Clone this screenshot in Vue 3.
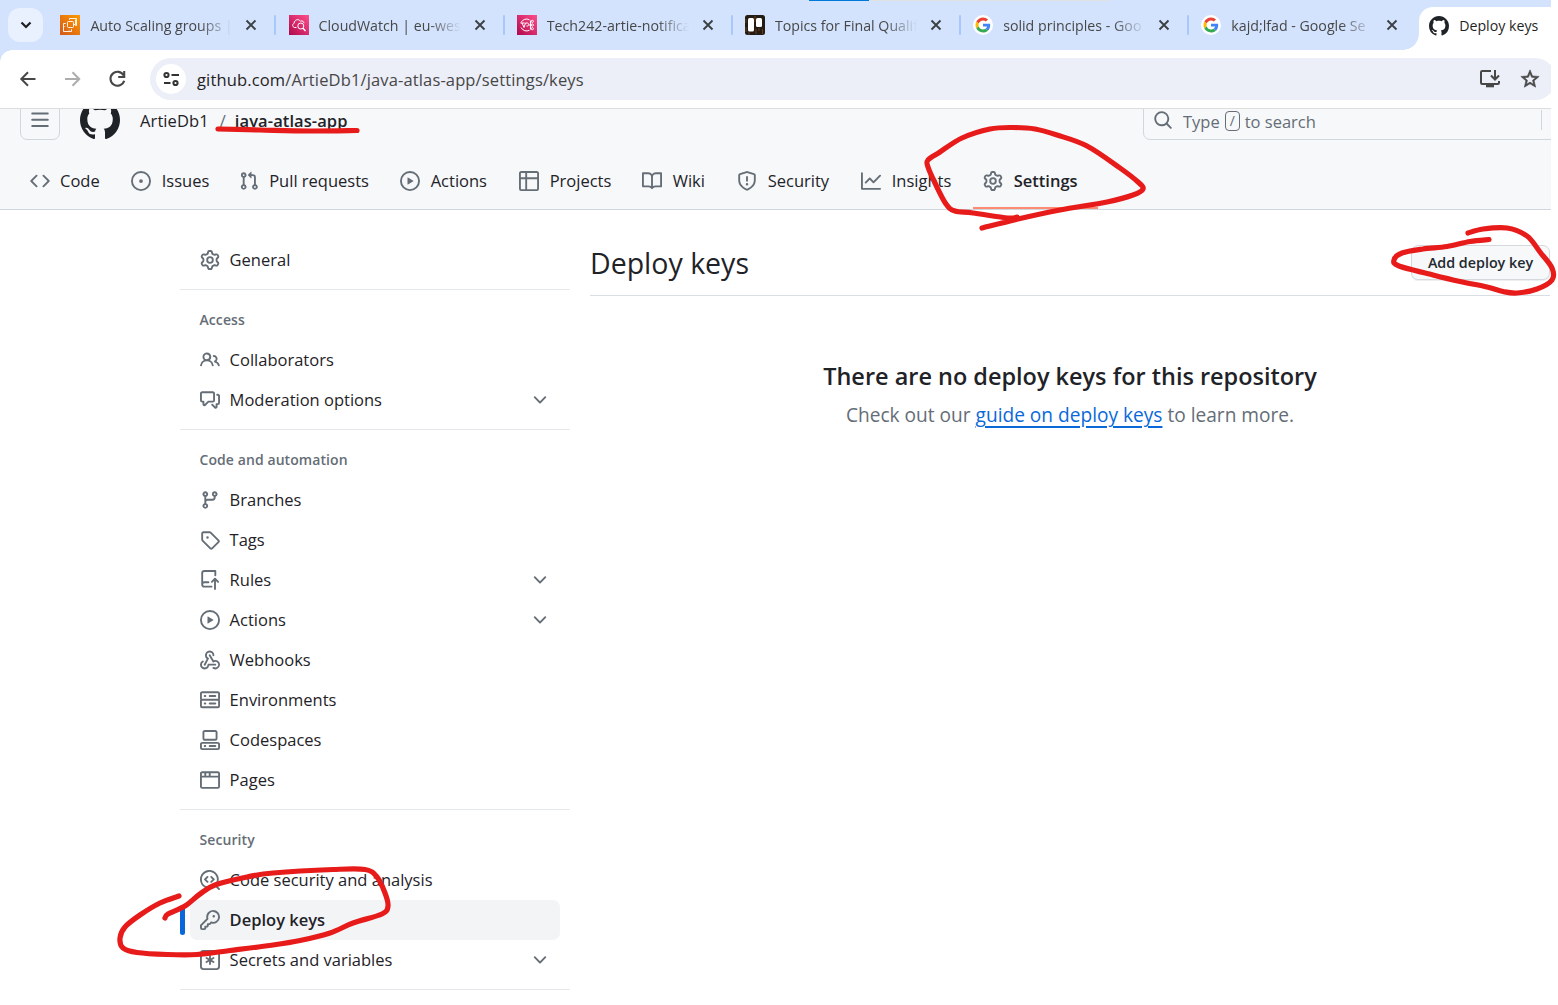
<script setup>
const icons = {
  bars: 'M1 2.75A.75.75 0 0 1 1.75 2h12.5a.75.75 0 0 1 0 1.5H1.75A.75.75 0 0 1 1 2.75Zm0 5A.75.75 0 0 1 1.75 7h12.5a.75.75 0 0 1 0 1.5H1.75A.75.75 0 0 1 1 7.75ZM1.75 12h12.5a.75.75 0 0 1 0 1.5H1.75a.75.75 0 0 1 0-1.5Z',
  github: 'M8 0c4.42 0 8 3.58 8 8a8.013 8.013 0 0 1-5.45 7.59c-.4.08-.55-.17-.55-.38 0-.27.01-1.13.01-2.2 0-.75-.25-1.23-.54-1.48 1.78-.2 3.65-.88 3.65-3.95 0-.88-.31-1.59-.82-2.15.08-.2.36-1.02-.08-2.12 0 0-.67-.22-2.2.82-.64-.18-1.32-.27-2-.27-.68 0-1.36.09-2 .27-1.53-1.03-2.2-.82-2.2-.82-.44 1.1-.16 1.92-.08 2.12-.51.56-.82 1.28-.82 2.15 0 3.06 1.86 3.75 3.64 3.95-.23.2-.44.55-.51 1.07-.46.21-1.61.55-2.33-.66-.15-.24-.6-.83-1.23-.82-.67.01-.27.38.01.53.34.19.73.9.82 1.13.16.45.68 1.31 2.69.94 0 .67.01 1.3.01 1.49 0 .21-.15.45-.55.38A7.995 7.995 0 0 1 0 8c0-4.42 3.58-8 8-8Z',
  search: 'M10.68 11.74a6 6 0 0 1-7.922-8.982 6 6 0 0 1 8.982 7.922l3.04 3.04a.749.749 0 0 1-.326 1.275.749.749 0 0 1-.734-.215ZM11.5 7a4.499 4.499 0 1 0-8.997 0A4.499 4.499 0 0 0 11.5 7Z',
  code: 'm11.28 3.22 4.25 4.25a.75.75 0 0 1 0 1.06l-4.25 4.25a.749.749 0 0 1-1.275-.326.749.749 0 0 1 .215-.734L13.94 8l-3.72-3.72a.749.749 0 0 1 .326-1.275.749.749 0 0 1 .734.215Zm-6.56 0a.751.751 0 0 1 1.042.018.751.751 0 0 1 .018 1.042L2.06 8l3.72 3.72a.749.749 0 0 1-.326 1.275.749.749 0 0 1-.734-.215L.47 8.53a.75.75 0 0 1 0-1.06Z',
  issue: 'M8 9.5a1.5 1.5 0 1 0 0-3 1.5 1.5 0 0 0 0 3ZM8 0a8 8 0 1 1 0 16A8 8 0 0 1 8 0ZM1.5 8a6.5 6.5 0 1 0 13 0 6.5 6.5 0 0 0-13 0Z',
  pull: 'M1.5 3.25a2.25 2.25 0 1 1 3 2.122v5.256a2.251 2.251 0 1 1-1.5 0V5.372A2.25 2.25 0 0 1 1.5 3.25Zm5.677-.177L9.573.677A.25.25 0 0 1 10 .854V2.5h1A2.5 2.5 0 0 1 13.5 5v5.628a2.251 2.251 0 1 1-1.5 0V5a1 1 0 0 0-1-1h-1v1.646a.25.25 0 0 1-.427.177L7.177 3.427a.25.25 0 0 1 0-.354ZM3.75 2.5a.75.75 0 1 0 0 1.5.75.75 0 0 0 0-1.5Zm0 9.5a.75.75 0 1 0 0 1.5.75.75 0 0 0 0-1.5Zm8.25.75a.75.75 0 1 0 1.5 0 .75.75 0 0 0-1.5 0Z',
  play: 'M8 0a8 8 0 1 1 0 16A8 8 0 0 1 8 0ZM1.5 8a6.5 6.5 0 1 0 13 0 6.5 6.5 0 0 0-13 0Zm4.879-2.773 4.264 2.559a.25.25 0 0 1 0 .428l-4.264 2.559A.25.25 0 0 1 6 10.559V5.442a.25.25 0 0 1 .379-.215Z',
  table: 'M0 1.75C0 .784.784 0 1.75 0h12.5C15.216 0 16 .784 16 1.75v12.5A1.75 1.75 0 0 1 14.25 16H1.75A1.75 1.75 0 0 1 0 14.25ZM6.5 6.5v8h7.75a.25.25 0 0 0 .25-.25V6.5Zm8-1.5V1.75a.25.25 0 0 0-.25-.25H6.5V5Zm-13 1.5v7.75c0 .138.112.25.25.25H5v-8ZM5 5V1.5H1.75a.25.25 0 0 0-.25.25V5Z',
  book: 'M0 1.75A.75.75 0 0 1 .75 1h4.253c1.227 0 2.317.59 3 1.501A3.743 3.743 0 0 1 11.006 1h4.245a.75.75 0 0 1 .75.75v10.5a.75.75 0 0 1-.75.75h-4.507a2.25 2.25 0 0 0-1.591.659l-.622.621a.75.75 0 0 1-1.06 0l-.622-.621A2.25 2.25 0 0 0 5.258 13H.75a.75.75 0 0 1-.75-.75Zm7.251 10.324.004-5.073-.002-2.253A2.25 2.25 0 0 0 5.003 2.5H1.5v9h3.757a3.75 3.75 0 0 1 1.994.574ZM8.755 4.75l-.004 7.322a3.752 3.752 0 0 1 1.992-.572H14.5v-9h-3.495a2.25 2.25 0 0 0-2.25 2.25Z',
  shield: 'M7.467.133a1.748 1.748 0 0 1 1.066 0l5.25 1.68A1.75 1.75 0 0 1 15 3.48V7c0 1.566-.32 3.182-1.303 4.682-.983 1.498-2.585 2.813-5.032 3.855a1.697 1.697 0 0 1-1.33 0c-2.447-1.042-4.049-2.357-5.032-3.855C1.32 10.182 1 8.566 1 7V3.48a1.75 1.75 0 0 1 1.217-1.667Zm.61 1.429a.25.25 0 0 0-.153 0l-5.25 1.68a.25.25 0 0 0-.174.238V7c0 1.358.275 2.666 1.057 3.86.784 1.194 2.121 2.34 4.366 3.297a.196.196 0 0 0 .154 0c2.245-.956 3.582-2.104 4.366-3.298C13.225 9.666 13.5 8.36 13.5 7V3.48a.251.251 0 0 0-.174-.237l-5.25-1.68ZM8.75 4.75v3a.75.75 0 0 1-1.5 0v-3a.75.75 0 0 1 1.5 0ZM9 10.5a1 1 0 1 1-2 0 1 1 0 0 1 2 0Z',
  graph: 'M1.5 1.75V13.5h13.75a.75.75 0 0 1 0 1.5H.75a.75.75 0 0 1-.75-.75V1.75a.75.75 0 0 1 1.5 0Zm14.28 2.53-5.25 5.25a.75.75 0 0 1-1.06 0L7 7.06 4.28 9.78a.751.751 0 0 1-1.042-.018.751.751 0 0 1-.018-1.042l3.25-3.25a.75.75 0 0 1 1.06 0L10 7.94l4.72-4.72a.751.751 0 0 1 1.042.018.751.751 0 0 1 .018 1.042Z',
  gear: 'M8 0a8.2 8.2 0 0 1 .701.031C9.444.095 9.99.645 10.16 1.29l.288 1.107c.018.066.079.158.212.224.231.114.454.243.668.386.123.082.233.09.299.071l1.103-.303c.644-.176 1.392.021 1.82.63.27.385.506.792.704 1.218.315.675.111 1.422-.364 1.891l-.814.806c-.049.048-.098.147-.088.294.016.257.016.515 0 .772-.01.147.038.246.088.294l.814.806c.475.469.679 1.216.364 1.891a7.977 7.977 0 0 1-.704 1.217c-.428.61-1.176.807-1.82.63l-1.102-.302c-.067-.019-.177-.011-.3.071a5.909 5.909 0 0 1-.668.386c-.133.066-.194.158-.211.224l-.29 1.106c-.168.646-.715 1.196-1.458 1.26a8.006 8.006 0 0 1-1.402 0c-.743-.064-1.289-.614-1.458-1.26l-.289-1.106c-.018-.066-.079-.158-.212-.224a5.738 5.738 0 0 1-.668-.386c-.123-.082-.233-.09-.299-.071l-1.103.303c-.644.176-1.392-.021-1.82-.63a8.12 8.12 0 0 1-.704-1.218c-.315-.675-.111-1.422.363-1.891l.815-.806c.05-.048.098-.147.088-.294a6.214 6.214 0 0 1 0-.772c.01-.147-.038-.246-.088-.294l-.815-.806C.635 6.045.431 5.298.746 4.623a7.92 7.92 0 0 1 .704-1.217c.428-.61 1.176-.807 1.82-.63l1.102.302c.067.019.177.011.3-.071.214-.143.437-.272.668-.386.133-.066.194-.158.211-.224l.29-1.106C6.009.645 6.556.095 7.299.03 7.53.01 7.764 0 8 0Zm-.571 1.525c-.036.003-.108.036-.137.146l-.289 1.105c-.147.561-.549.967-.998 1.189-.173.086-.34.183-.5.29-.417.278-.97.423-1.529.27l-1.103-.303c-.109-.03-.175.016-.195.045-.22.312-.412.644-.573.99-.014.031-.021.11.059.19l.815.806c.411.406.562.957.53 1.456a4.709 4.709 0 0 0 0 .582c.032.499-.119 1.05-.53 1.456l-.815.806c-.081.08-.073.159-.059.19.162.346.353.677.573.989.02.03.085.076.195.046l1.102-.303c.56-.153 1.113-.008 1.53.27.161.107.328.204.501.29.447.222.85.629.997 1.189l.289 1.105c.029.109.101.143.137.146a6.6 6.6 0 0 0 1.142 0c.036-.003.108-.036.137-.146l.289-1.105c.147-.561.549-.967.998-1.189.173-.086.34-.183.5-.29.417-.278.97-.423 1.529-.27l1.103.303c.109.029.175-.016.195-.045.22-.313.411-.644.573-.99.014-.031.021-.11-.059-.19l-.815-.806c-.411-.406-.562-.957-.53-1.456a4.709 4.709 0 0 0 0-.582c-.032-.499.119-1.05.53-1.456l.815-.806c.081-.08.073-.159.059-.19a6.464 6.464 0 0 0-.573-.989c-.02-.03-.085-.076-.195-.046l-1.102.303c-.56.153-1.113.008-1.53-.27a4.44 4.44 0 0 0-.501-.29c-.447-.222-.85-.629-.997-1.189l-.289-1.105c-.029-.11-.101-.143-.137-.146a6.6 6.6 0 0 0-1.142 0ZM11 8a3 3 0 1 1-6 0 3 3 0 0 1 6 0ZM9.5 8a1.5 1.5 0 1 0-3.001.001A1.5 1.5 0 0 0 9.5 8Z',
  people: 'M2 5.5a3.5 3.5 0 1 1 5.898 2.549 5.508 5.508 0 0 1 3.034 4.084.75.75 0 1 1-1.482.235 4 4 0 0 0-7.9 0 .75.75 0 0 1-1.482-.236A5.507 5.507 0 0 1 3.102 8.05 3.493 3.493 0 0 1 2 5.5ZM11 4a3.001 3.001 0 0 1 2.22 5.018 5.01 5.01 0 0 1 2.56 3.012.749.749 0 0 1-.885.954.752.752 0 0 1-.549-.514 3.507 3.507 0 0 0-2.522-2.372.75.75 0 0 1-.574-.73v-.352a.75.75 0 0 1 .416-.672A1.5 1.5 0 0 0 11 5.5.75.75 0 0 1 11 4Zm-5.5-.5a2 2 0 1 0-.001 3.999A2 2 0 0 0 5.5 3.5Z',
  comments: 'M1.75 1h8.5c.966 0 1.75.784 1.75 1.75v5.5A1.75 1.75 0 0 1 10.25 10H7.061l-2.574 2.573A1.458 1.458 0 0 1 2 11.543V10h-.25A1.75 1.75 0 0 1 0 8.25v-5.5C0 1.784.784 1 1.75 1ZM1.5 2.75v5.5c0 .138.112.25.25.25h1a.75.75 0 0 1 .75.75v2.19l2.72-2.72a.749.749 0 0 1 .53-.22h3.5a.25.25 0 0 0 .25-.25v-5.5a.25.25 0 0 0-.25-.25h-8.5a.25.25 0 0 0-.25.25Zm13 2a.25.25 0 0 0-.25-.25h-.5a.75.75 0 0 1 0-1.5h.5c.966 0 1.75.784 1.75 1.75v5.5A1.75 1.75 0 0 1 14.25 12H14v1.543a1.458 1.458 0 0 1-2.487 1.03L9.22 12.28a.749.749 0 0 1 .326-1.275.749.749 0 0 1 .734.215l2.22 2.22v-2.19a.75.75 0 0 1 .75-.75h1a.25.25 0 0 0 .25-.25Z',
  chevron: 'M12.78 5.22a.749.749 0 0 1 0 1.06l-4.25 4.25a.749.749 0 0 1-1.06 0L3.22 6.28a.749.749 0 1 1 1.06-1.06L8 8.939l3.72-3.719a.749.749 0 0 1 1.06 0Z',
  branch: 'M9.5 3.25a2.25 2.25 0 1 1 3 2.122V6A2.5 2.5 0 0 1 10 8.5H6a1 1 0 0 0-1 1v1.128a2.251 2.251 0 1 1-1.5 0V5.372a2.25 2.25 0 1 1 1.5 0v1.836A2.493 2.493 0 0 1 6 7h4a1 1 0 0 0 1-1v-.628A2.25 2.25 0 0 1 9.5 3.25Zm-6 0a.75.75 0 1 0 1.5 0 .75.75 0 0 0-1.5 0Zm8.25-.75a.75.75 0 1 0 0 1.5.75.75 0 0 0 0-1.5ZM4.25 12a.75.75 0 1 0 0 1.5.75.75 0 0 0 0-1.5Z',
  tag: 'M1 7.775V2.75C1 1.784 1.784 1 2.75 1h5.025c.464 0 .91.184 1.238.513l6.25 6.25a1.75 1.75 0 0 1 0 2.474l-5.026 5.026a1.75 1.75 0 0 1-2.474 0l-6.25-6.25A1.752 1.752 0 0 1 1 7.775Zm1.5 0c0 .066.026.13.073.177l6.25 6.25a.25.25 0 0 0 .354 0l5.025-5.025a.25.25 0 0 0 0-.354l-6.25-6.25a.25.25 0 0 0-.177-.073H2.75a.25.25 0 0 0-.25.25ZM6 5a1 1 0 1 1 0 2 1 1 0 0 1 0-2Z',
  push: 'M1 2.5A2.5 2.5 0 0 1 3.5 0h8.75a.75.75 0 0 1 .75.75v3.5a.75.75 0 0 1-1.5 0V1.5h-8a1 1 0 0 0-1 1v6.708A2.493 2.493 0 0 1 3.5 9h3.25a.75.75 0 0 1 0 1.5H3.5a1 1 0 0 0 0 2h5.75a.75.75 0 0 1 0 1.5H3.5A2.5 2.5 0 0 1 1 11.5ZM12.75 8.81v6.44a.75.75 0 0 1-1.5 0V8.81l-1.22 1.22a.75.75 0 0 1-1.06-1.06l2.5-2.5a.75.75 0 0 1 1.06 0l2.5 2.5a.75.75 0 0 1-1.06 1.06Z',
  webhook: 'M5.5 4.25a2.25 2.25 0 0 1 4.5 0 .75.75 0 0 0 1.5 0 3.75 3.75 0 1 0-6.14 2.889l-2.272 4.258a.75.75 0 0 0 1.324.706L7 7.25a.75.75 0 0 0-.309-1.015A2.25 2.25 0 0 1 5.5 4.25ZM7.364 3.607a.75.75 0 0 1 1.03.257l2.608 4.349a3.75 3.75 0 1 1-.628 6.785.75.75 0 0 1 .752-1.299 2.25 2.25 0 1 0-.033-3.88.75.75 0 0 1-1.03-.256L7.107 4.636a.75.75 0 0 1 .257-1.03ZM2.9 8.776A.75.75 0 0 1 2.625 9.8 2.25 2.25 0 1 0 6 11.75a.75.75 0 0 1 .75-.751h5.5a.75.75 0 0 1 0 1.5H7.425a3.751 3.751 0 1 1-5.55-3.998.75.75 0 0 1 1.024.274Z',
  server: 'M1.75 1h12.5c.966 0 1.75.784 1.75 1.75v4c0 .372-.116.717-.314 1 .198.283.314.628.314 1v4a1.75 1.75 0 0 1-1.75 1.75H1.75A1.75 1.75 0 0 1 0 12.75v-4c0-.358.109-.707.314-1a1.739 1.739 0 0 1-.314-1v-4C0 1.784.784 1 1.75 1ZM1.5 2.75v4c0 .138.112.25.25.25h12.5a.25.25 0 0 0 .25-.25v-4a.25.25 0 0 0-.25-.25H1.75a.25.25 0 0 0-.25.25Zm.25 5.75a.25.25 0 0 0-.25.25v4c0 .138.112.25.25.25h12.5a.25.25 0 0 0 .25-.25v-4a.25.25 0 0 0-.25-.25ZM7 4.75A.75.75 0 0 1 7.75 4h4.5a.75.75 0 0 1 0 1.5h-4.5A.75.75 0 0 1 7 4.75ZM7.75 10h4.5a.75.75 0 0 1 0 1.5h-4.5a.75.75 0 0 1 0-1.5ZM3 4.75A.75.75 0 0 1 3.75 4h.5a.75.75 0 0 1 0 1.5h-.5A.75.75 0 0 1 3 4.75ZM3.75 10h.5a.75.75 0 0 1 0 1.5h-.5a.75.75 0 0 1 0-1.5Z',
  codespaces: 'M0 11.25c0-.966.784-1.75 1.75-1.75h12.5c.966 0 1.75.784 1.75 1.75v3A1.75 1.75 0 0 1 14.25 16H1.75A1.75 1.75 0 0 1 0 14.25Zm2-9.5C2 .784 2.784 0 3.75 0h8.5C13.216 0 14 .784 14 1.75v5a1.75 1.75 0 0 1-1.75 1.75h-8.5A1.75 1.75 0 0 1 2 6.75Zm1.75-.25a.25.25 0 0 0-.25.25v5c0 .138.112.25.25.25h8.5a.25.25 0 0 0 .25-.25v-5a.25.25 0 0 0-.25-.25Zm-2 9.5a.25.25 0 0 0-.25.25v3c0 .138.112.25.25.25h12.5a.25.25 0 0 0 .25-.25v-3a.25.25 0 0 0-.25-.25ZM7 12.75a.75.75 0 0 1 .75-.75h4.5a.75.75 0 0 1 0 1.5h-4.5a.75.75 0 0 1-.75-.75Zm-4 0a.75.75 0 0 1 .75-.75h.5a.75.75 0 0 1 0 1.5h-.5a.75.75 0 0 1-.75-.75Z',
  browser: 'M0 2.75C0 1.784.784 1 1.75 1h12.5c.966 0 1.75.784 1.75 1.75v10.5A1.75 1.75 0 0 1 14.25 15H1.75A1.75 1.75 0 0 1 0 13.25ZM14.5 6h-13v7.25c0 .138.112.25.25.25h12.5a.25.25 0 0 0 .25-.25Zm-6-3.5v2h6V2.75a.25.25 0 0 0-.25-.25ZM5 2.5v2h2v-2Zm-3.25 0a.25.25 0 0 0-.25.25V4.5h2v-2Z',
  scan: 'M8.47 4.97a.75.75 0 0 1 1.06 0l2 2a.75.75 0 0 1 0 1.06l-2 2a.749.749 0 0 1-1.275-.326.749.749 0 0 1 .215-.734L9.94 7.5 8.47 6.03a.75.75 0 0 1 0-1.06ZM6.53 6.03 5.06 7.5l1.47 1.47a.749.749 0 0 1-.326 1.275.749.749 0 0 1-.734-.215l-2-2a.75.75 0 0 1 0-1.06l2-2a.751.751 0 0 1 1.042.018.751.751 0 0 1 .018 1.042ZM12.246 13.307a7.501 7.501 0 1 1 1.06-1.06l2.474 2.473a.749.749 0 0 1-.326 1.275.749.749 0 0 1-.734-.215ZM1.5 7.5a6.002 6.002 0 0 0 3.608 5.504 6.002 6.002 0 0 0 6.486-1.117.748.748 0 0 1 .292-.293A6 6 0 1 0 1.5 7.5Z',
  key: 'M10.5 0a5.499 5.499 0 1 1-1.288 10.848l-.932.932a.749.749 0 0 1-.53.22H7v.75a.749.749 0 0 1-.22.53l-.5.5a.749.749 0 0 1-.53.22H5v.75a.749.749 0 0 1-.22.53l-.5.5a.749.749 0 0 1-.53.22h-2A1.75 1.75 0 0 1 0 14.25v-2c0-.199.079-.389.22-.53l4.932-4.932A5.5 5.5 0 0 1 10.5 0Zm-4 5.5c-.001.431.069.86.205 1.269a.75.75 0 0 1-.181.768L1.5 12.56v1.69c0 .138.112.25.25.25h1.69l.06-.06v-1.19a.75.75 0 0 1 .75-.75h1.19l.06-.06v-1.19a.75.75 0 0 1 .75-.75h1.19l1.023-1.025a.75.75 0 0 1 .768-.18A4 4 0 1 0 6.5 5.5ZM11 6a1 1 0 1 1 0-2 1 1 0 0 1 0 2Z',
  asterisk: 'M0 2.75A2.75 2.75 0 0 1 2.75 0h10.5A2.75 2.75 0 0 1 16 2.75v10.5A2.75 2.75 0 0 1 13.25 16H2.75A2.75 2.75 0 0 1 0 13.25ZM2.75 1.5c-.69 0-1.25.56-1.25 1.25v10.5c0 .69.56 1.25 1.25 1.25h10.5c.69 0 1.25-.56 1.25-1.25V2.75c0-.69-.56-1.25-1.25-1.25ZM8 4a.75.75 0 0 1 .75.75V6.7l1.69-.975a.75.75 0 0 1 .75 1.3L9.5 8l1.69.976a.75.75 0 0 1-.75 1.298L8.75 9.3v1.951a.75.75 0 0 1-1.5 0V9.299l-1.69.976a.75.75 0 0 1-.75-1.3L6.5 8l-1.69-.975a.75.75 0 0 1 .75-1.3l1.69.976V4.75A.75.75 0 0 1 8 4Z'
}

const browserTabs = [
  { fav: 'ec2', title: 'Auto Scaling groups |' },
  { fav: 'cloudwatch', title: 'CloudWatch | eu-wes' },
  { fav: 'sns', title: 'Tech242-artie-notifica' },
  { fav: 'trello', title: 'Topics for Final Qualif' },
  { fav: 'google', title: 'solid principles - Goo' },
  { fav: 'google', title: 'kajd;lfad - Google Se' }
]

const repoNav = [
  { icon: 'code', label: 'Code' },
  { icon: 'issue', label: 'Issues' },
  { icon: 'pull', label: 'Pull requests' },
  { icon: 'play', label: 'Actions' },
  { icon: 'table', label: 'Projects' },
  { icon: 'book', label: 'Wiki' },
  { icon: 'shield', label: 'Security' },
  { icon: 'graph', label: 'Insights' },
  { icon: 'gear', label: 'Settings', active: true }
]

const groups = [
  { items: [{ icon: 'gear', label: 'General' }] },
  {
    heading: 'Access',
    items: [
      { icon: 'people', label: 'Collaborators' },
      { icon: 'comments', label: 'Moderation options', more: true }
    ]
  },
  {
    heading: 'Code and automation',
    items: [
      { icon: 'branch', label: 'Branches' },
      { icon: 'tag', label: 'Tags' },
      { icon: 'push', label: 'Rules', more: true },
      { icon: 'play', label: 'Actions', more: true },
      { icon: 'webhook', label: 'Webhooks' },
      { icon: 'server', label: 'Environments' },
      { icon: 'codespaces', label: 'Codespaces' },
      { icon: 'browser', label: 'Pages' }
    ]
  },
  {
    heading: 'Security',
    items: [
      { icon: 'scan', label: 'Code security and analysis' },
      { icon: 'key', label: 'Deploy keys', active: true },
      { icon: 'asterisk', label: 'Secrets and variables', more: true }
    ]
  }
]

// Freehand pen strokes, as the points the pen passed through.
const strokes = [
  [[218, 129], [260, 130], [310, 131], [357, 130.5]],
  [[982, 228], [1018, 219], [1060, 210], [1107, 202], [1133, 195], [1143, 189], [1138, 182], [1120, 168], [1087, 146], [1057, 135], [1035, 129], [1013, 127.5], [990, 129], [962, 138], [940, 152], [928, 160], [928, 167], [935, 183], [946, 204], [955, 211], [973, 213], [1008, 218], [1017, 217]],
  [[1468, 233], [1483, 229], [1507, 228], [1527, 236], [1540, 252], [1552, 268], [1552, 280], [1537, 289], [1517, 293], [1503, 291.5], [1487, 287], [1460, 281.5], [1433, 275], [1399, 266], [1394, 260], [1402, 253], [1423, 249], [1447, 246.5], [1470, 241.5], [1489, 239.5]],
  [[179, 896], [160, 903], [140, 915], [125, 927], [120, 938], [123, 948], [137, 952.5], [167, 954.5], [197, 954.5], [230, 950.5], [273, 945], [300, 940.5], [330, 933], [353, 923], [382, 914], [388, 906], [385, 893], [377, 877], [365, 869.5], [333, 869.5], [273, 873], [247, 877], [215, 885], [200, 894], [185, 906], [168, 914], [165, 918]]
]

function smooth(p) {
  let d = `M${p[0][0]} ${p[0][1]}`
  for (let i = 0; i < p.length - 1; i++) {
    const a = p[i - 1] || p[i]
    const b = p[i]
    const c = p[i + 1]
    const e = p[i + 2] || c
    d += `C${b[0] + (c[0] - a[0]) / 6} ${b[1] + (c[1] - a[1]) / 6} ${c[0] - (e[0] - b[0]) / 6} ${c[1] - (e[1] - b[1]) / 6} ${c[0]} ${c[1]}`
  }
  return d
}
</script>

<template>
  <div class="screen">
    <div class="window">
      <div class="tabstrip">
        <span class="loadbar"><i></i></span>
        <button class="tab-search">
          <svg width="12" height="8" viewBox="0 0 12 8"><path d="M1.5 1.5 6 6l4.5-4.5" fill="none" stroke="#1f1f1f" stroke-width="2.2" /></svg>
        </button>
        <div v-for="tab in browserTabs" :key="tab.title" class="tab">
          <svg v-if="tab.fav === 'ec2'" class="fav" viewBox="0 0 20 20">
            <defs><linearGradient id="orange" x1="0" y1="1" x2="1" y2="0"><stop stop-color="#d3591a" /><stop offset="1" stop-color="#f90" /></linearGradient></defs>
            <path fill="url(#orange)" d="M0 0h20v20H0z" />
            <g fill="none" stroke="#fff" stroke-width=".9">
              <rect x="7.500" y="6.500" width="6" height="6" rx="1" />
              <path d="M9.500 4.800V3.500h7v7h-1.300M5.800 8.500H3.500v8h8v-2.300M13.500 9.500h2v-5" />
              <path d="M9 16.500v-2M5.500 11.500h-2" opacity=".500" />
            </g>
          </svg>
          <svg v-else-if="tab.fav === 'cloudwatch'" class="fav" viewBox="0 0 20 20">
            <defs><linearGradient id="pink" x1="0" y1="1" x2="1" y2="0"><stop stop-color="#b0084d" /><stop offset="1" stop-color="#ff4f8b" /></linearGradient></defs>
            <path fill="url(#pink)" d="M0 0h20v20H0z" />
            <path d="M7.500 12.500H5.500C3.300 12 3 9 5.200 8.200 5.200 4.800 9.500 3.300 11.500 6.200c2-.900 3.300.300 3.500 2" fill="none" stroke="#fff" stroke-width="1" />
            <circle cx="11.800" cy="11" r="3" fill="none" stroke="#fff" stroke-width="1" />
            <path d="m14 13.200 2.500 2.800" stroke="#fff" stroke-width="1.400" />
          </svg>
          <svg v-else-if="tab.fav === 'sns'" class="fav" viewBox="0 0 20 20">
            <path fill="url(#pink)" d="M0 0h20v20H0z" />
            <path d="M12.500 4.800A6.200 6.200 0 0 0 4 7.500M4 12.500a6.200 6.200 0 0 0 8.500 2.700M3.500 8h4.200M5 8l2 4.500L8.500 8h2c1.500 0 1.500 3 0 3H9.500M12 10h1.500M13.500 5.500v9" fill="none" stroke="#fff" stroke-width="1" />
            <circle cx="15.300" cy="6.300" r="1.100" fill="none" stroke="#fff" /><circle cx="15.300" cy="10" r="1.100" fill="none" stroke="#fff" /><circle cx="15.300" cy="13.700" r="1.100" fill="none" stroke="#fff" />
          </svg>
          <svg v-else-if="tab.fav === 'trello'" class="fav" viewBox="0 0 20 20">
            <rect width="20" height="20" rx="2.500" fill="#231b14" />
            <path d="M1 12v5M4 17v3M11 14v5M14 13v3M17.500 14v5M1 4v4M10 1v6" stroke="#6b3d18" stroke-width="1" />
            <rect x="3" y="3" width="6" height="13.500" rx="1.500" fill="#fff" /><rect x="11" y="3" width="6" height="9" rx="1.500" fill="#fff" />
          </svg>
          <svg v-else class="fav" viewBox="0 0 20 20">
            <circle cx="10" cy="10" r="10" fill="#fff" />
            <g transform="translate(2.500 2.500) scale(.3125)">
              <path fill="#ea4335" d="M24 9.500c3.540 0 6.710 1.220 9.210 3.600l6.850-6.850C35.900 2.380 30.470 0 24 0 14.620 0 6.510 5.380 2.560 13.220l7.980 6.190C12.430 13.720 17.740 9.500 24 9.500z" />
              <path fill="#4285f4" d="M46.980 24.550c0-1.570-.150-3.090-.380-4.550H24v9.020h12.940c-.580 2.960-2.260 5.480-4.780 7.180l7.730 6c4.510-4.180 7.090-10.360 7.090-17.650z" />
              <path fill="#fbbc05" d="M10.530 28.590c-.480-1.450-.760-2.990-.760-4.590s.270-3.140.760-4.590l-7.980-6.190C.920 16.460 0 20.120 0 24c0 3.880.920 7.540 2.560 10.780l7.970-6.190z" />
              <path fill="#34a853" d="M24 48c6.480 0 11.930-2.130 15.890-5.810l-7.730-6c-2.150 1.450-4.920 2.300-8.160 2.300-6.260 0-11.570-4.220-13.470-9.910l-7.980 6.190C6.510 42.620 14.620 48 24 48z" />
            </g>
          </svg>
          <span class="tab-title">{{ tab.title }}</span>
          <svg class="close" viewBox="0 0 12 12"><path d="m1.500 1.500 9 9m0-9-9 9" stroke="#3c4043" stroke-width="1.900" /></svg>
          <i class="sep"></i>
        </div>
        <div class="tab-active">
          <svg class="fav" viewBox="0 0 16 16"><path fill="#1f2328" :d="icons.github" /></svg>
          <span>Deploy keys</span>
        </div>
      </div>

      <div class="toolbar">
        <svg class="nav-btn" viewBox="0 0 20 20"><path d="M17.500 10H4M10 3.300 3.300 10l6.700 6.700" fill="none" stroke="#474747" stroke-width="2" /></svg>
        <svg class="nav-btn" viewBox="0 0 20 20"><path d="M2 10H15.500M9.500 3.300l6.700 6.700-6.700 6.700" fill="none" stroke="#adadad" stroke-width="2" /></svg>
        <svg class="nav-btn" viewBox="0 0 20 20"><path d="M15.700 6.500A7 7 0 1 0 16.200 11.800" fill="none" stroke="#474747" stroke-width="2.100" /><path d="M16.200 2v6h-6" fill="none" stroke="#474747" stroke-width="2.100" /></svg>
        <div class="omnibox">
          <span class="site-info">
            <svg width="18" height="16" viewBox="0 0 18 16" fill="none" stroke="#333" stroke-width="2"><circle cx="4.500" cy="4" r="2.100" /><path d="M9.500 4H17M2 12h6.500" /><circle cx="13.500" cy="12" r="2.100" /></svg>
          </span>
          <span class="url"><span class="host">github.com</span>/ArtieDb1/java-atlas-app/settings/keys</span>
          <svg class="omni-ico" width="22" height="20" viewBox="0 0 22 20"><path d="M12 2H3.200Q2 2 2 3.200v10.600Q2 15 3.200 15h15.600q1.200 0 1.200-1.200V12" fill="none" stroke="#474747" stroke-width="2" /><path d="M7 15h8v3.300H7z" fill="#474747" /><path d="M16 1v9m-4-3.500 4 4 4-4" fill="none" stroke="#474747" stroke-width="2" /></svg>
          <svg class="omni-ico" width="22" height="22" viewBox="0 0 24 24"><path fill="#474747" d="M22 9.240l-7.190-.620L12 2 9.190 8.630 2 9.240l5.460 4.730L5.820 21 12 17.270 18.180 21l-1.630-7.030L22 9.240zM12 15.400l-3.760 2.270 1-4.280-3.320-2.880 4.380-.380L12 6.100l1.710 4.040 4.380.380-3.320 2.880 1 4.280L12 15.400z" stroke="#474747" stroke-width=".600" /></svg>
        </div>
      </div>

      <header class="gh-header">
        <div class="gh-top">
          <button class="menu"><svg class="oct" viewBox="0 0 16 16"><path :d="icons.bars" /></svg></button>
          <svg class="logo" viewBox="0 0 16 16"><path :d="icons.github" /></svg>
          <span class="owner">ArtieDb1</span><span class="slash">/</span><strong class="repo">java-atlas-app</strong>
          <div class="search">
            <svg class="oct" viewBox="0 0 16 16"><path :d="icons.search" /></svg>
            <span class="search-text">Type <kbd>/</kbd> to search</span>
            <i></i>
          </div>
        </div>
        <nav class="repo-nav">
          <a v-for="n in repoNav" :key="n.label" :class="{ active: n.active }">
            <svg class="oct" viewBox="0 0 16 16"><path :d="icons[n.icon]" /></svg><span>{{ n.label }}</span>
          </a>
        </nav>
      </header>

      <div class="page">
        <aside class="sidebar">
          <section v-for="(g, i) in groups" :key="i">
            <h3 v-if="g.heading">{{ g.heading }}</h3>
            <a v-for="it in g.items" :key="it.label" class="item" :class="{ active: it.active }">
              <svg class="oct" viewBox="0 0 16 16"><path :d="icons[it.icon]" /></svg>
              <span>{{ it.label }}</span>
              <svg v-if="it.more" class="oct more" viewBox="0 0 16 16"><path :d="icons.chevron" /></svg>
            </a>
          </section>
        </aside>
        <main>
          <div class="subhead">
            <h2>Deploy keys</h2>
            <button class="add">Add deploy key</button>
          </div>
          <div class="blank">
            <h3>There are no deploy keys for this repository</h3>
            <p>Check out our <a>guide on deploy keys</a> to learn more.</p>
          </div>
        </main>
      </div>
    </div>

    <svg class="ink" viewBox="0 0 1558 1005">
      <path v-for="(s, i) in strokes" :key="i" :d="smooth(s)" />
    </svg>
  </div>
</template>

<style>
body {
  margin: 0;
  background: #fff;
}
</style>

<style scoped>
.screen {
  position: relative;
  width: 1558px;
  height: 1005px;
  overflow: hidden;
  background: #fff;
  color: #1f2328;
  font-family: "Open Sans", "Noto Sans", sans-serif;
  font-size: 16.5px;
}
.screen * { box-sizing: border-box; }
.window { width: 1551px; height: 1005px; overflow: hidden; }
button { padding: 0; margin: 0; font-family: inherit; }
svg { display: block; flex: none; }
h2, h3, p { margin: 0; }

.tabstrip {
  position: relative;
  display: flex;
  height: 50px;
  background: #d3e3fd;
  font-size: 14.2px;
  color: #474747;
}
.loadbar {
  position: absolute;
  left: 809px;
  top: 0;
  width: 301px;
  height: 1px;
  background: #dfe0e2;
}
.loadbar i { display: block; width: 60px; height: 1px; background: #0078d7; }
.tab-search {
  display: flex;
  align-items: center;
  justify-content: center;
  width: 35px;
  height: 34px;
  margin: 8px 9.400px 0 8px;
  border: 0;
  border-radius: 12px;
  background: #e9f1fe;
}
.tab {
  display: flex;
  align-items: center;
  flex: none;
  width: 228.200px;
  padding-left: 8px;
}
.fav { width: 20px; height: 20px; margin-right: 10px; }
.tab-title {
  width: 150px;
  margin-right: -10px;
  white-space: nowrap;
  -webkit-mask-image: linear-gradient(90deg, #000 110px, transparent 142px);
  mask-image: linear-gradient(90deg, #000 110px, transparent 142px);
}
.close { width: 12px; height: 12px; margin-left: 15px; }
.sep { width: 2px; height: 20px; margin-left: 17px; border-radius: 1px; background: #a8c7fa; }
.tab:nth-last-child(2) .sep { visibility: hidden; }
.tab-active {
  position: relative;
  display: flex;
  align-items: center;
  flex: 1;
  height: 43px;
  margin: 7px 0 0 -2.400px;
  padding: 0 0 6px 10px;
  border-radius: 14px 0 0 0;
  background: #fff;
  color: #1f1f1f;
  white-space: nowrap;
}
.tab-active::before {
  content: "";
  position: absolute;
  left: -16px;
  bottom: 0;
  width: 16px;
  height: 16px;
  background: radial-gradient(circle at 0 0, #d3e3fd 15.500px, #fff 16px);
}

.toolbar {
  display: flex;
  align-items: center;
  height: 59px;
  padding-left: 18px;
  border-bottom: 1px solid #dcdedd;
  background: radial-gradient(circle at 12px 12px, #fff 11.500px, #d3e3fd 12px) 0 0 / 12px 12px no-repeat, #fff;
}
.nav-btn { width: 20px; height: 20px; margin-right: 25px; }
.omnibox {
  display: flex;
  align-items: center;
  width: 1406px;
  flex: none;
  height: 42px;
  margin-left: -3px;
  padding-left: 6px;
  border-radius: 21px;
  background: #eceef8;
}
.site-info {
  display: flex;
  align-items: center;
  justify-content: center;
  width: 30px;
  height: 30px;
  border-radius: 50%;
  background: #fff;
}
.url { flex: 1; margin-left: 11px; font-size: 16.500px; letter-spacing: .140px; color: #474747; }
.host { color: #1f1f1f; }
.omni-ico { margin-right: 18px; }
.omni-ico:last-child { margin-right: 15px; }

.gh-header {
  height: 101px;
  overflow: hidden;
  border-bottom: 1px solid #d0d7de;
  background: #f6f8fa;
}
.gh-top { display: flex; align-items: center; height: 40px; margin-top: -9px; padding-left: 20px; }
.oct { width: 20px; height: 20px; fill: #656d76; }
.menu {
  display: flex;
  align-items: center;
  justify-content: center;
  width: 40px;
  height: 40px;
  border: 1px solid #d0d7de;
  border-radius: 7px;
  background: none;
}
.logo { width: 40px; height: 40px; margin: 0 20px; fill: #1f2328; }
.owner { letter-spacing: .100px; }
.slash { margin: 0 9px 0 11px; color: #656d76; }
.repo { font-weight: 600; letter-spacing: .080px; }
.search {
  display: flex;
  align-items: center;
  width: 420px;
  height: 40px;
  margin-left: auto;
  margin-right: -12px;
  padding-left: 9px;
  border: 1px solid #d0d7de;
  border-radius: 7px;
  color: #656d76;
}
.search-text { display: flex; align-items: center; gap: 5px; margin-left: 10px; padding-top: 2px; }
.search kbd {
  width: 15px;
  height: 20px;
  border: 1px solid #656d76;
  border-radius: 4px;
  font: 14px/18px "Open Sans", sans-serif;
  text-align: center;
}
.search i { width: 1px; height: 20px; margin: 0 20px 0 auto; background: #d0d7de; }
.repo-nav {
  display: grid;
  grid-template-columns: 101px 107.500px 161.500px 119px 123px 95px 124px 122px 115px;
  height: 69px;
  padding: 20px 0 0 30px;
}
.repo-nav a { position: relative; display: flex; align-items: center; height: 41px; white-space: nowrap; }
.repo-nav .oct { margin-right: 10.700px; }
.repo-nav a:first-child .oct { margin-right: 10px; }
.repo-nav .active { font-weight: 600; }
.repo-nav .active::after {
  content: "";
  position: absolute;
  left: -10px;
  right: 0;
  top: 47px;
  height: 2px;
  background: #fd8c73;
}

.page { display: flex; padding-left: 180px; }
.sidebar { width: 390px; margin-right: 20px; padding-top: 30px; }
.sidebar section { padding-bottom: 9px; margin-bottom: 10px; border-bottom: 1px solid #e6e9ec; }
.sidebar h3 {
  height: 40px;
  padding-left: 19.500px;
  line-height: 40px;
  font-size: 14px;
  font-weight: 600;
  letter-spacing: .080px;
  color: #656d76;
}
.item {
  position: relative;
  display: flex;
  align-items: center;
  height: 40px;
  margin: 0 10px;
  padding: 0 10px;
  border-radius: 7px;
}
.item span { margin-left: 9.600px; padding-bottom: 2px; }
.more { margin-left: auto; }
.item.active { background: #f3f4f6; font-weight: 600; }
.item.active::before {
  content: "";
  position: absolute;
  left: -10px;
  top: 5px;
  width: 5px;
  height: 30px;
  border-radius: 3px;
  background: #0969da;
}

main { width: 960px; }
.subhead {
  display: flex;
  align-items: center;
  justify-content: space-between;
  height: 86px;
  padding-top: 19px;
  border-bottom: 1px solid #d8dee4;
}
.subhead h2 { padding-top: 1px; font-size: 28.500px; font-weight: 400; }
.add {
  width: 139px;
  height: 35px;
  border: 1px solid #d5d9dd;
  border-radius: 7px;
  background: #f6f8fa;
  box-shadow: 0 1px 0 #eceef0;
  color: #24292f;
  font-size: 14.300px;
  font-weight: 600;
}
.blank { padding-top: 60px; text-align: center; }
.blank h3 { font-size: 23.480px; line-height: 40px; font-weight: 600; }
.blank p { font-size: 19.120px; line-height: 38px; color: #656d76; }
.blank a { color: #0969da; text-decoration: underline; text-underline-offset: 4px; text-decoration-thickness: 2px; }

.ink { position: absolute; inset: 0; width: 1558px; height: 1005px; pointer-events: none; }
.ink path { fill: none; stroke: #e81b1b; stroke-width: 5.200px; stroke-linecap: round; stroke-linejoin: round; }
</style>
